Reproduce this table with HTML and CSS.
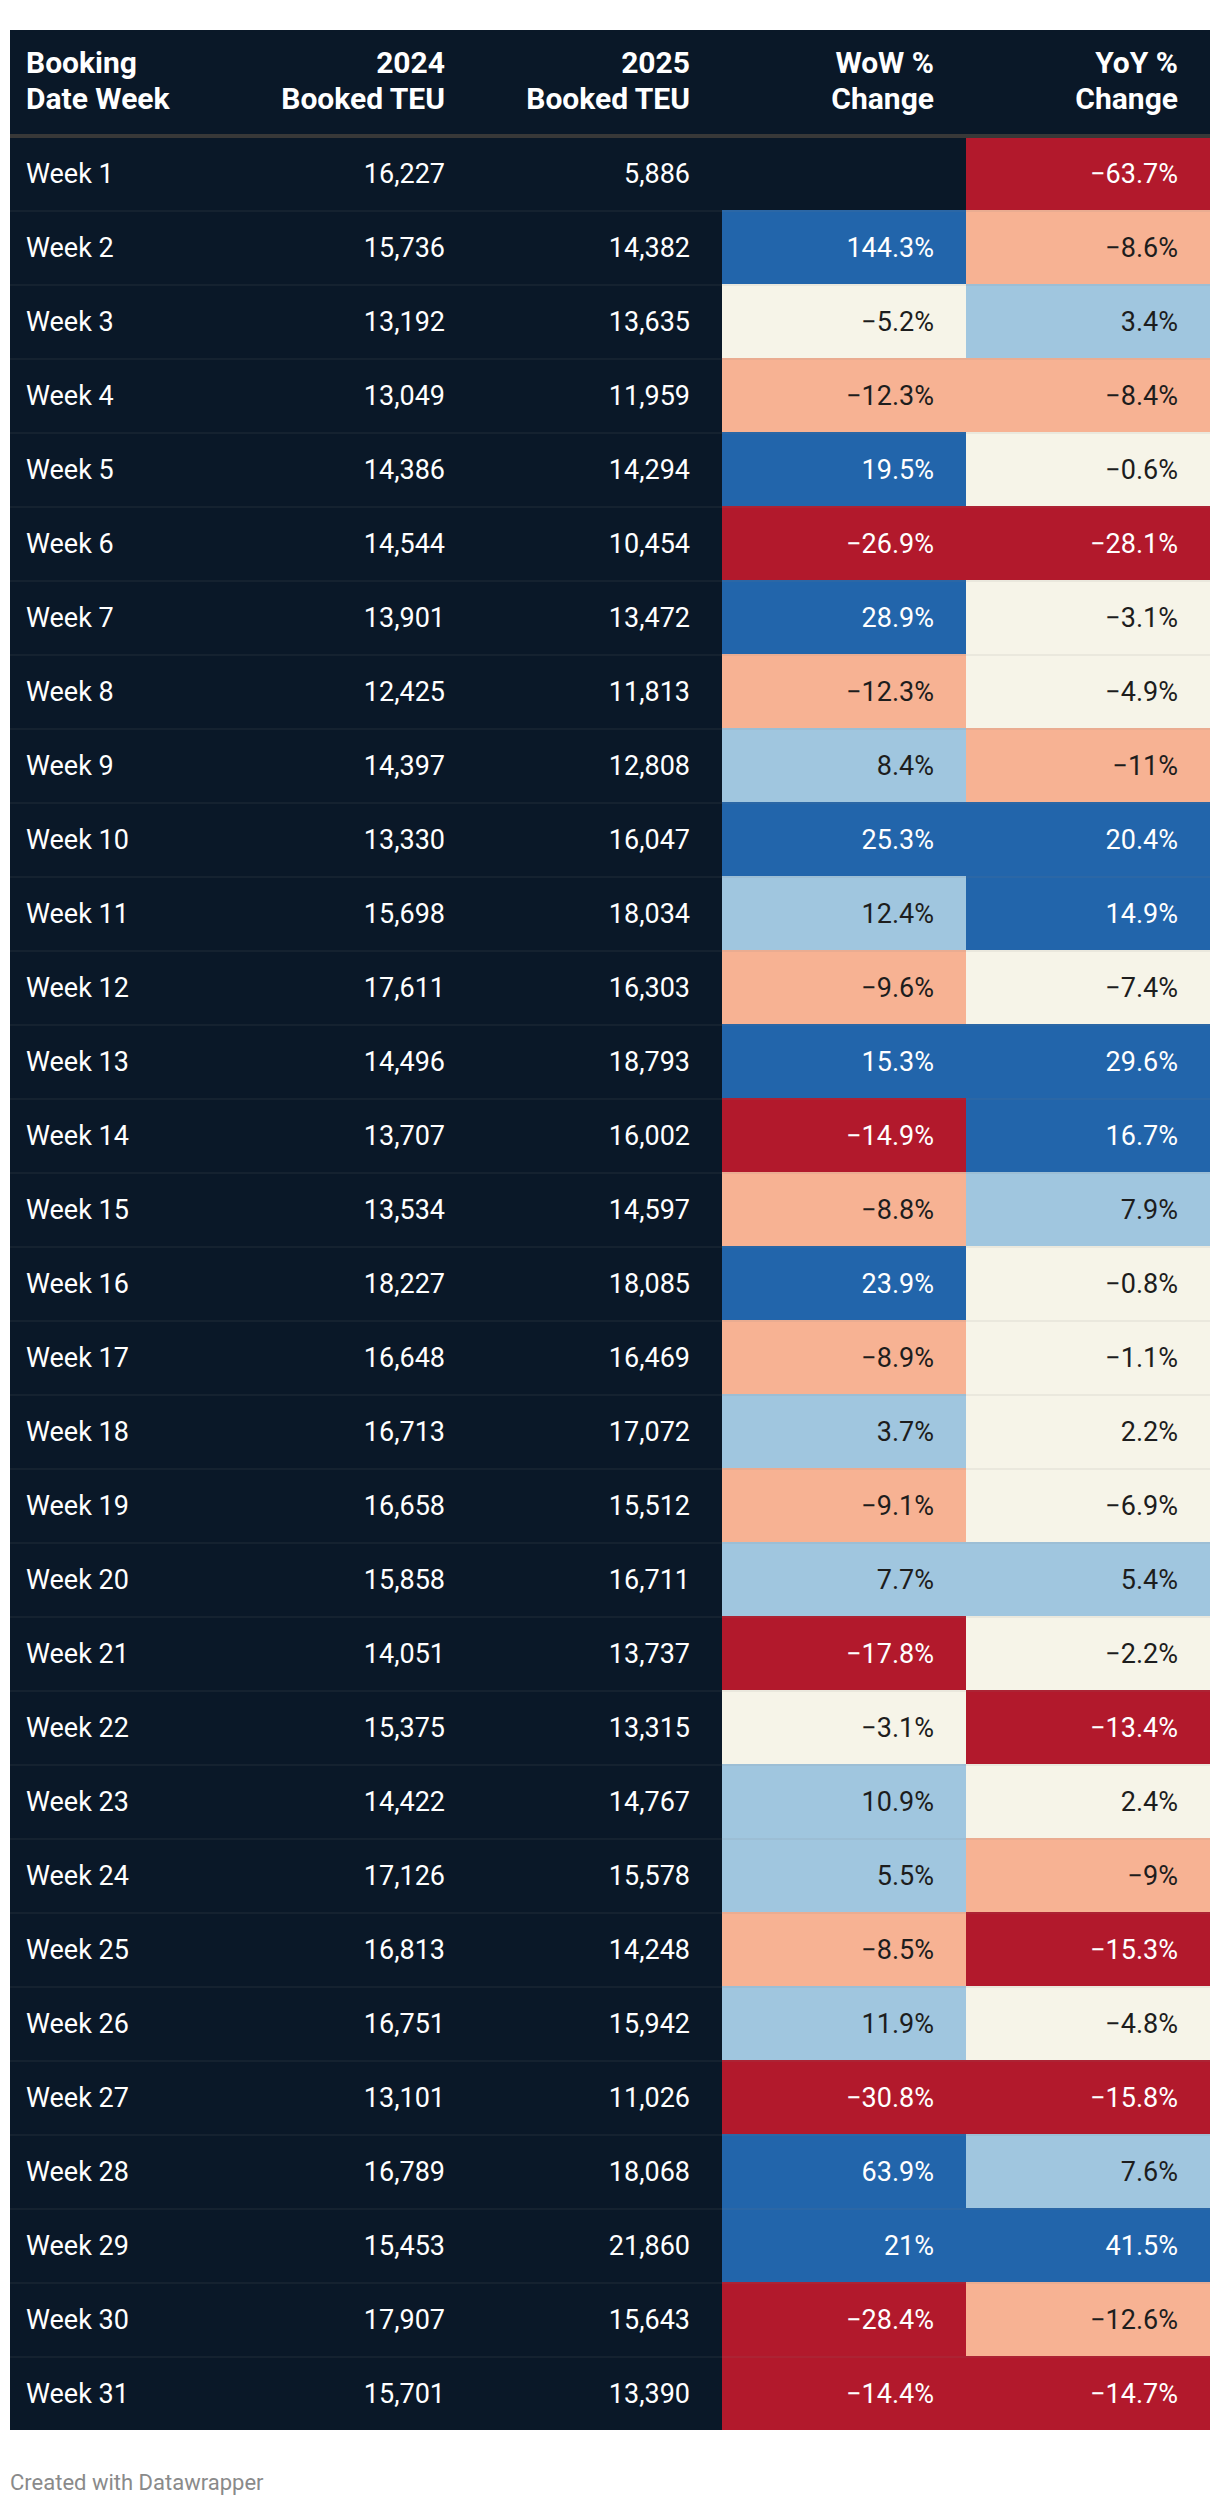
FILE: index.html
```html
<!DOCTYPE html>
<html lang="en">
<head>
<meta charset="utf-8">
<title>Booked TEU by Week</title>
<link rel="stylesheet" href="styles.css">
</head>
<body>
<table class="dw-table">
  <colgroup>
    <col class="c-week"><col class="c-num"><col class="c-num"><col class="c-pct"><col class="c-pct">
  </colgroup>
  <thead>
    <tr>
      <th class="left">Booking<br>Date Week</th>
      <th>2024<br>Booked TEU</th>
      <th>2025<br>Booked TEU</th>
      <th>WoW %<br>Change</th>
      <th>YoY %<br>Change</th>
    </tr>
  </thead>
  <tbody>
    <tr><td class="left">Week 1</td><td>16,227</td><td>5,886</td><td></td><td class="red">−63.7%</td></tr>
    <tr><td class="left">Week 2</td><td>15,736</td><td>14,382</td><td class="blue">144.3%</td><td class="peach">−8.6%</td></tr>
    <tr><td class="left">Week 3</td><td>13,192</td><td>13,635</td><td class="cream">−5.2%</td><td class="lblue">3.4%</td></tr>
    <tr><td class="left">Week 4</td><td>13,049</td><td>11,959</td><td class="peach">−12.3%</td><td class="peach">−8.4%</td></tr>
    <tr><td class="left">Week 5</td><td>14,386</td><td>14,294</td><td class="blue">19.5%</td><td class="cream">−0.6%</td></tr>
    <tr><td class="left">Week 6</td><td>14,544</td><td>10,454</td><td class="red">−26.9%</td><td class="red">−28.1%</td></tr>
    <tr><td class="left">Week 7</td><td>13,901</td><td>13,472</td><td class="blue">28.9%</td><td class="cream">−3.1%</td></tr>
    <tr><td class="left">Week 8</td><td>12,425</td><td>11,813</td><td class="peach">−12.3%</td><td class="cream">−4.9%</td></tr>
    <tr><td class="left">Week 9</td><td>14,397</td><td>12,808</td><td class="lblue">8.4%</td><td class="peach">−11%</td></tr>
    <tr><td class="left">Week 10</td><td>13,330</td><td>16,047</td><td class="blue">25.3%</td><td class="blue">20.4%</td></tr>
    <tr><td class="left">Week 11</td><td>15,698</td><td>18,034</td><td class="lblue">12.4%</td><td class="blue">14.9%</td></tr>
    <tr><td class="left">Week 12</td><td>17,611</td><td>16,303</td><td class="peach">−9.6%</td><td class="cream">−7.4%</td></tr>
    <tr><td class="left">Week 13</td><td>14,496</td><td>18,793</td><td class="blue">15.3%</td><td class="blue">29.6%</td></tr>
    <tr><td class="left">Week 14</td><td>13,707</td><td>16,002</td><td class="red">−14.9%</td><td class="blue">16.7%</td></tr>
    <tr><td class="left">Week 15</td><td>13,534</td><td>14,597</td><td class="peach">−8.8%</td><td class="lblue">7.9%</td></tr>
    <tr><td class="left">Week 16</td><td>18,227</td><td>18,085</td><td class="blue">23.9%</td><td class="cream">−0.8%</td></tr>
    <tr><td class="left">Week 17</td><td>16,648</td><td>16,469</td><td class="peach">−8.9%</td><td class="cream">−1.1%</td></tr>
    <tr><td class="left">Week 18</td><td>16,713</td><td>17,072</td><td class="lblue">3.7%</td><td class="cream">2.2%</td></tr>
    <tr><td class="left">Week 19</td><td>16,658</td><td>15,512</td><td class="peach">−9.1%</td><td class="cream">−6.9%</td></tr>
    <tr><td class="left">Week 20</td><td>15,858</td><td>16,711</td><td class="lblue">7.7%</td><td class="lblue">5.4%</td></tr>
    <tr><td class="left">Week 21</td><td>14,051</td><td>13,737</td><td class="red">−17.8%</td><td class="cream">−2.2%</td></tr>
    <tr><td class="left">Week 22</td><td>15,375</td><td>13,315</td><td class="cream">−3.1%</td><td class="red">−13.4%</td></tr>
    <tr><td class="left">Week 23</td><td>14,422</td><td>14,767</td><td class="lblue">10.9%</td><td class="cream">2.4%</td></tr>
    <tr><td class="left">Week 24</td><td>17,126</td><td>15,578</td><td class="lblue">5.5%</td><td class="peach">−9%</td></tr>
    <tr><td class="left">Week 25</td><td>16,813</td><td>14,248</td><td class="peach">−8.5%</td><td class="red">−15.3%</td></tr>
    <tr><td class="left">Week 26</td><td>16,751</td><td>15,942</td><td class="lblue">11.9%</td><td class="cream">−4.8%</td></tr>
    <tr><td class="left">Week 27</td><td>13,101</td><td>11,026</td><td class="red">−30.8%</td><td class="red">−15.8%</td></tr>
    <tr><td class="left">Week 28</td><td>16,789</td><td>18,068</td><td class="blue">63.9%</td><td class="lblue">7.6%</td></tr>
    <tr><td class="left">Week 29</td><td>15,453</td><td>21,860</td><td class="blue">21%</td><td class="blue">41.5%</td></tr>
    <tr><td class="left">Week 30</td><td>17,907</td><td>15,643</td><td class="red">−28.4%</td><td class="peach">−12.6%</td></tr>
    <tr><td class="left">Week 31</td><td>15,701</td><td>13,390</td><td class="red">−14.4%</td><td class="red">−14.7%</td></tr>
  </tbody>
</table>
<div class="footer">Created with Datawrapper</div>
</body>
</html>
```
FILE: styles.css
```css
html, body {
  margin: 0;
  padding: 0;
  background: #ffffff;
}
body {
  padding: 30px 10px 0;
  font-family: Roboto, "Liberation Sans", sans-serif;
}
.dw-table {
  width: 1200px;
  table-layout: fixed;
  border-collapse: separate;
  border-spacing: 0;
  background: #0a1828;
  color: #ffffff;
}
.c-week { width: 222px; }
.c-num { width: 245px; }
.c-pct { width: 244px; }

.dw-table th {
  font-weight: 700;
  font-size: 30px;
  line-height: 36px;
  text-align: right;
  vertical-align: bottom;
  padding: 15px 32px 17px 16px;
  border-bottom: 4px solid #383838;
  white-space: nowrap;
}
.dw-table td {
  font-size: 27px;
  font-weight: 400;
  height: 72px;
  padding: 0 32px 0 16px;
  text-align: right;
  vertical-align: middle;
  border-top: 2px solid rgba(128, 128, 128, 0.1);
  white-space: nowrap;
  box-sizing: content-box;
}
.dw-table tbody tr:first-child td {
  border-top: none;
}
.dw-table .left {
  text-align: left;
}
.red { background: #b2192c; color: #ffffff; }
.blue { background: #2265ab; color: #ffffff; }
.peach { background: #f7b293; color: #1d1d1d; }
.cream { background: #f6f4e8; color: #1d1d1d; }
.lblue { background: #a0c6df; color: #1d1d1d; }

.footer {
  margin-top: 40px;
  font-size: 22px;
  line-height: 26px;
  color: #8a8a8a;
}
```
